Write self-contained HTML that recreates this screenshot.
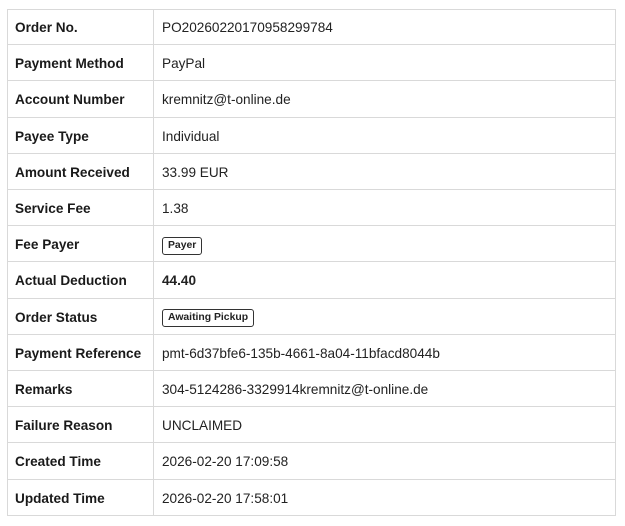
<!DOCTYPE html>
<html><head><style>
body{margin:0;width:625px;height:526px;background:#fff;font-family:"Liberation Sans",Arial,sans-serif;color:#222;position:relative;overflow:hidden}
.box{position:absolute;left:7px;top:9px;width:609px;height:507px;border:1px solid #d9d9d9;box-sizing:border-box}
.r{position:absolute;left:7px;width:609px;height:36.2px;border-bottom:1px solid #d9d9d9;box-sizing:border-box;font-size:13.6px}
.l{position:absolute;left:8px;top:1px;line-height:36px;font-weight:bold;color:#1a1a1a}
.v{position:absolute;left:155px;top:1px;line-height:36px}
.div{position:absolute;left:153px;top:9px;width:1px;height:507px;background:#d9d9d9}
.b{display:inline-block;font-size:10.4px;font-weight:bold;border:1px solid #333;border-radius:3px;padding:2px 5px;line-height:12px;vertical-align:middle}
</style></head><body>
<div class="box"></div><div class="div"></div>
<div class="r" style="top:9px"><span class="l">Order No.</span><span class="v">PO20260220170958299784</span></div>
<div class="r" style="top:45.2px"><span class="l">Payment Method</span><span class="v">PayPal</span></div>
<div class="r" style="top:81.4px"><span class="l">Account Number</span><span class="v">kremnitz@t-online.de</span></div>
<div class="r" style="top:117.6px"><span class="l">Payee Type</span><span class="v">Individual</span></div>
<div class="r" style="top:153.8px"><span class="l">Amount Received</span><span class="v">33.99 EUR</span></div>
<div class="r" style="top:190px"><span class="l">Service Fee</span><span class="v">1.38</span></div>
<div class="r" style="top:226.2px"><span class="l">Fee Payer</span><span class="v"><span class="b">Payer</span></span></div>
<div class="r" style="top:262.4px"><span class="l">Actual Deduction</span><span class="v" style="font-weight:bold">44.40</span></div>
<div class="r" style="top:298.6px"><span class="l">Order Status</span><span class="v"><span class="b">Awaiting Pickup</span></span></div>
<div class="r" style="top:334.8px"><span class="l">Payment Reference</span><span class="v">pmt-6d37bfe6-135b-4661-8a04-11bfacd8044b</span></div>
<div class="r" style="top:371px"><span class="l">Remarks</span><span class="v">304-5124286-3329914kremnitz@t-online.de</span></div>
<div class="r" style="top:407.2px"><span class="l">Failure Reason</span><span class="v">UNCLAIMED</span></div>
<div class="r" style="top:443.4px"><span class="l">Created Time</span><span class="v">2026-02-20 17:09:58</span></div>
<div class="r" style="top:479.6px"><span class="l">Updated Time</span><span class="v">2026-02-20 17:58:01</span></div>
</body></html>
